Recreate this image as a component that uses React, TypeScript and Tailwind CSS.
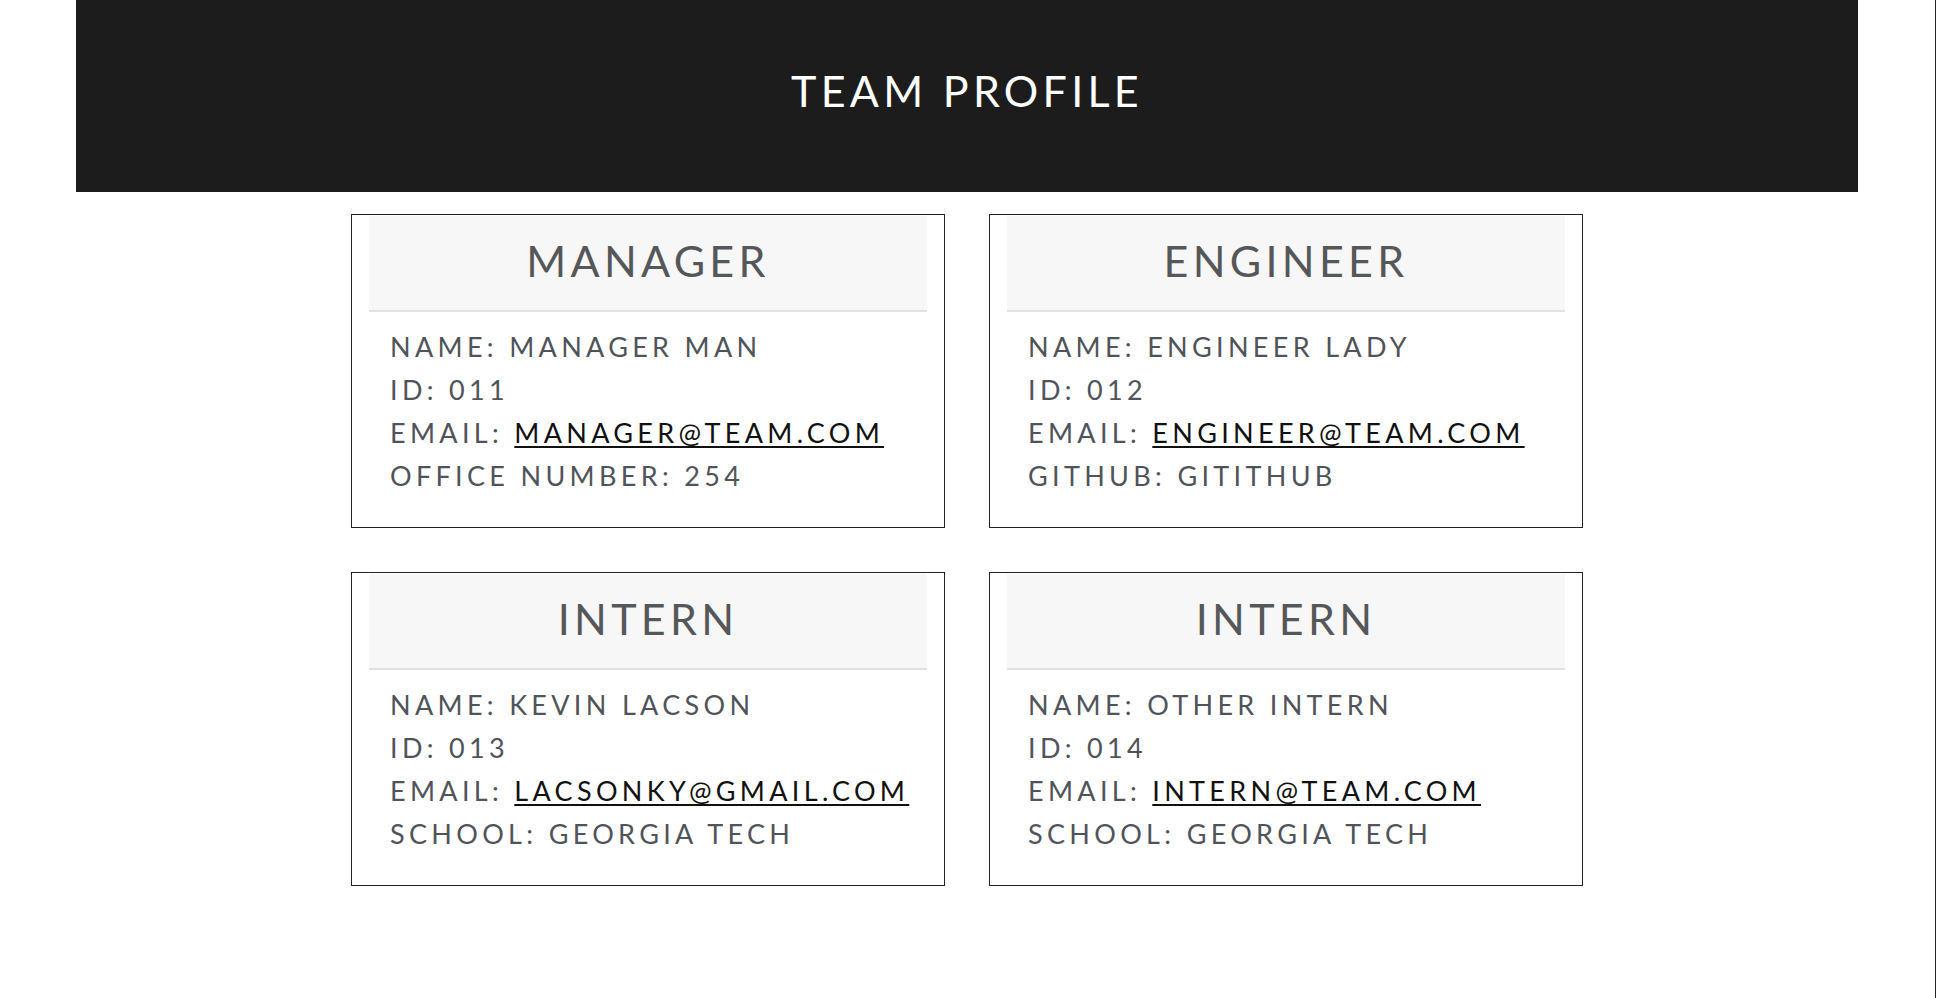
const team = [
  {
    role: "Manager",
    name: "Manager Man",
    id: "011",
    email: "manager@team.com",
    extraLabel: "Office Number",
    extra: "254",
  },
  {
    role: "Engineer",
    name: "Engineer Lady",
    id: "012",
    email: "engineer@team.com",
    extraLabel: "GitHub",
    extra: "gitithub",
  },
  {
    role: "Intern",
    name: "Kevin Lacson",
    id: "013",
    email: "lacsonky@gmail.com",
    extraLabel: "School",
    extra: "Georgia Tech",
  },
  {
    role: "Intern",
    name: "Other Intern",
    id: "014",
    email: "intern@team.com",
    extraLabel: "School",
    extra: "Georgia Tech",
  },
];

type Member = (typeof team)[number];

function EmployeeCard({ member }: { member: Member }) {
  return (
    <div className="h-[314px] border border-[#222] px-[17px] pt-px">
      <div className="flex h-[96px] items-center justify-center border-b-2 border-[#e2e2e2] bg-[#f7f7f7] pb-[5px]">
        <h2 className="text-[43px] uppercase leading-none tracking-[0.1em] text-[#555759]">
          {member.role}
        </h2>
      </div>
      <ul className="pl-[21px] pt-[13px] text-[27px] uppercase leading-[43px] tracking-[0.16em] text-[#50545a]">
        <li>Name: {member.name}</li>
        <li>ID: {member.id}</li>
        <li>
          Email:{" "}
          <a
            href={`mailto:${member.email}`}
            className="text-[#111] underline underline-offset-[3px]"
          >
            {member.email}
          </a>
        </li>
        <li>
          {member.extraLabel}: {member.extra}
        </li>
      </ul>
    </div>
  );
}

export default function App() {
  return (
    <div className="min-h-screen border-r border-[#222] bg-white font-['Lato','Nunito','Open_Sans',sans-serif]">
      <header className="ml-[76px] flex h-[192px] w-[1782px] items-center justify-center bg-[#1c1c1c] pb-[12px]">
        <h1 className="text-[43px] uppercase leading-none tracking-[0.1em] text-white">
          Team Profile
        </h1>
      </header>

      <main className="mt-[22px] grid grid-cols-[594px_594px] justify-center gap-[44px] pr-px">
        {team.map((member) => (
          <EmployeeCard key={member.id} member={member} />
        ))}
      </main>
    </div>
  );
}
